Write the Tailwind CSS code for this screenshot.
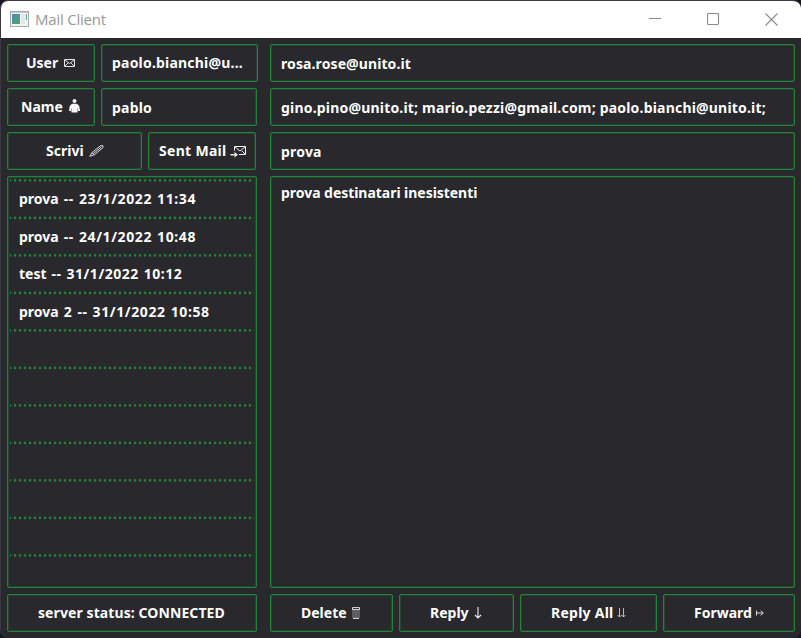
<!DOCTYPE html>
<html lang="it">
<head>
<meta charset="utf-8">
<title>Mail Client</title>
<script src="https://cdn.jsdelivr.net/npm/@tailwindcss/browser@4"></script>
</head>
<body class="w-[801px] h-[638px] overflow-hidden bg-[#111821]">
<div class="w-[801px] h-[638px] rounded-[8px] border-l border-t border-[#393944] bg-[#28282d] overflow-hidden flex flex-col font-['Noto_Sans','Open_Sans',sans-serif]">
  <header class="h-[37px] shrink-0 bg-white flex items-center pl-[9px] pr-[23px]">
    <svg class="w-[19px] h-[16px] -mt-px shrink-0" viewBox="0 0 19 16">
      <defs><linearGradient id="g" x1="0" y1="0" x2="1" y2="1"><stop offset="0" stop-color="#4b8aa7"/><stop offset="1" stop-color="#56a477"/></linearGradient></defs>
      <rect x=".5" y=".5" width="18" height="15" fill="#f3f3f3" stroke="#a5abad"/>
      <path d="M1 1.5h17" stroke="#c9cdd0"/><rect x="2" y="3" width="8" height="10" fill="url(#g)"/>
      <rect x="11" y="3" width="4" height="10" fill="#e5e7e8"/><rect x="16" y="3" width="1" height="6" fill="#62a58a"/>
    </svg>
    <span class="ml-[6px] -mt-px text-[15px] leading-[20px] tracking-[-0.22px] text-[#999] font-['Open_Sans',sans-serif] whitespace-nowrap">Mail Client</span>
    <div class="ml-auto flex items-center gap-[45px] text-[#8c8c8c]">
      <svg class="w-[13px] h-[13px] -mt-[2px]" viewBox="0 0 13 13"><path d="M0 6.5h12" stroke="currentColor"/></svg>
      <svg class="w-[13px] h-[13px] -mt-px" viewBox="0 0 13 13"><rect x=".5" y=".5" width="11" height="11" rx="1" fill="none" stroke="currentColor" stroke-width="1.2"/></svg>
      <svg class="w-[13px] h-[13px] -mt-px" viewBox="0 0 13 13"><path d="M.5.5l12 12M12.5.5l-12 12" stroke="currentColor" stroke-width="1.1"/></svg>
    </div>
  </header>
  <main class="flex grow pt-[6px] pl-[6px] text-white font-bold text-[14px] leading-[20px] whitespace-nowrap">
    <section class="w-[251px] mr-[12px] shrink-0 flex flex-col gap-[6px]">
      <div class="flex gap-[6px] h-[38px]">
        <div class="w-[88px] border border-[#238239] inset-shadow-[0_0_0_1px_#23823955] rounded-[2px] flex items-center pl-[18px]"><span>User</span>
          <svg class="ml-[6px] -mt-px w-[11px] h-[8px]" viewBox="0 0 11 8" fill="none" stroke="#e4e4e4"><path d="M.5.5h10v7H.5zM1 1l4.5 3.5L10 1M1 7l3-3M10 7L7 4"/></svg></div>
        <div class="w-[157px] border border-[#238239] inset-shadow-[0_0_0_1px_#23823955] rounded-[2px] flex items-center pl-[10px] tracking-[0.2px]">paolo.bianchi@u...</div>
      </div>
      <div class="flex gap-[6px] h-[38px]">
        <div class="w-[88px] border border-[#238239] inset-shadow-[0_0_0_1px_#23823955] rounded-[2px] flex items-center pl-[13px]"><span>Name</span>
          <svg class="ml-[6px] -mt-[2px] w-[11px] h-[14px]" viewBox="0 0 11 14" fill="#f5f5f5"><circle cx="5.5" cy="2" r="2"/><path d="M3 4.7h5L10.3 7 11 12H9V9.5h-.4v4h-6.2v-4H2V12H0L.7 7z"/></svg></div>
        <div class="w-[156px] border border-[#238239] inset-shadow-[0_0_0_1px_#23823955] rounded-[2px] flex items-center pl-[10px] pt-[2px] tracking-[0.2px]">pablo</div>
      </div>
      <div class="flex gap-[6px] h-[38px]">
        <div class="w-[135px] border border-[#238239] inset-shadow-[0_0_0_1px_#23823955] rounded-[2px] flex items-center pl-[38px]"><span>Scrivi</span>
          <svg class="ml-[5px] w-[15px] h-[12px]" viewBox="0 0 15 12" fill="none" stroke="#eee" stroke-width=".9"><path d="M.8 11.3l2-3.6L11.3.9l2.6-.3-.1 2.2L5.3 9.8z"/><path d="M2.8 7.7l2.4 2M4.3 8.5l8-6.5"/></svg></div>
        <div class="w-[108px] border border-[#238239] inset-shadow-[0_0_0_1px_#23823955] rounded-[2px] flex items-center pl-[10px]"><span class="tracking-[0.3px]">Sent Mail</span>
          <svg class="ml-[3px] mt-[2px] w-[16px] h-[12px]" viewBox="0 0 16 12" fill="none" stroke="#f0f0f0"><path d="M4.5 4.5v-4h11v8H9M5 1l5 4 5-4M15 8l-3-3"/><path d="M.5 8.7h5" stroke-width="1.6"/><path d="M4 5.5l4 3.2-4 3.1 1.2-3.1z" fill="#f0f0f0" stroke="none"/></svg></div>
      </div>
      <div class="relative w-[250px] h-[412px] border border-[#238239] inset-shadow-[0_0_0_1px_#23823955] rounded-[2px] overflow-hidden">
        <svg class="absolute left-[2px] top-[2px] w-[244px] h-[380px]" stroke="#238239" stroke-width="2.6" stroke-linecap="round" stroke-dasharray="0 5">
          <path d="M0 1.4H246M0 38.9H246M0 76.4H246M0 113.9H246M0 151.4H246M0 188.9H246M0 226.4H246M0 263.9H246M0 301.4H246M0 338.9H246M0 376.4H246"/>
        </svg>
        <ul class="pt-[3px] pl-[11px] [word-spacing:0.8px] tracking-[0.6px]">
          <li class="h-[37.5px] flex items-center"><span><span class="tracking-normal">prova</span> -- 23/1/2022 11:34</span></li>
          <li class="h-[37.5px] flex items-center pt-px"><span><span class="tracking-normal">prova</span> -- 24/1/2022 10:48</span></li>
          <li class="h-[37.5px] flex items-center tracking-[0.52px]"><span><span class="tracking-normal">test</span> -- 31/1/2022 10:12</span></li>
          <li class="h-[37.5px] flex items-center pt-px"><span><span class="tracking-normal">prova</span> 2 -- 31/1/2022 10:58</span></li>
        </ul>
      </div>
      <div class="w-[250px] h-[38px] border border-[#238239] inset-shadow-[0_0_0_1px_#23823955] rounded-[2px] flex items-center pl-[30px] tracking-[0.09px]">server status: CONNECTED</div>
    </section>
    <section class="w-[525px] shrink-0 flex flex-col gap-[6px]">
      <div class="h-[38px] border border-[#238239] inset-shadow-[0_0_0_1px_#23823955] rounded-[2px] flex items-center pl-[10px] pt-[2px] tracking-[0.1px]">rosa.rose@unito.it</div>
      <div class="h-[38px] border border-[#238239] inset-shadow-[0_0_0_1px_#23823955] rounded-[2px] flex items-center pl-[10px] pt-[2px] tracking-[0.19px]">gino.pino@unito.it; mario.pezzi@gmail.com; paolo.bianchi@unito.it;</div>
      <div class="h-[38px] border border-[#238239] inset-shadow-[0_0_0_1px_#23823955] rounded-[2px] flex items-center pl-[10px] pt-[2px] tracking-[0.2px]">prova</div>
      <div class="h-[412px] border border-[#238239] inset-shadow-[0_0_0_1px_#23823955] rounded-[2px] pl-[10px] pt-[6px] tracking-[-0.04px]">prova destinatari inesistenti</div>
      <div class="flex gap-[6px] h-[38px]">
        <div class="w-[123px] border border-[#238239] inset-shadow-[0_0_0_1px_#23823955] rounded-[2px] flex items-center pl-[30px]"><span>Delete</span>
          <svg class="ml-[5px] w-[8px] h-[12px]" viewBox="0 0 8 12" fill="none" stroke="#e4e4e4"><path d="M.5.6h7v2h-7zM1 11.4h6"/><path d="M1 3v8M3 3v8M5 3v8M7 3v8" stroke="#8d9296"/></svg></div>
        <div class="w-[115px] border border-[#238239] inset-shadow-[0_0_0_1px_#23823955] rounded-[2px] flex items-center pl-[30px]"><span>Reply</span>
          <svg class="ml-[5px] w-[8px] h-[12px]" viewBox="0 0 8 12" fill="none" stroke="#eee" stroke-width="1.1"><path d="M4 0v11M1 8l3 3 3-3"/></svg></div>
        <div class="w-[137px] border border-[#238239] inset-shadow-[0_0_0_1px_#23823955] rounded-[2px] flex items-center pl-[30px]"><span class="tracking-[0.25px]">Reply All</span>
          <svg class="ml-[4px] w-[9px] h-[10px]" viewBox="0 0 9 10" fill="none" stroke="#ccc" stroke-width=".9"><path d="M2.5 0v9M.5 7l2 2 2-2M6.5 0v9M4.5 7l2 2 2-2"/></svg></div>
        <div class="w-[132px] border border-[#238239] inset-shadow-[0_0_0_1px_#23823955] rounded-[2px] flex items-center pl-[30px]"><span>Forward</span>
          <svg class="ml-[4px] w-[8px] h-[6px]" viewBox="0 0 8 6" fill="none" stroke="#ddd"><path d="M.5.5v5M.5 3h6.8M4.7.5L7.2 3 4.7 5.5"/></svg></div>
      </div>
    </section>
  </main>
</div>
</body>
</html>
